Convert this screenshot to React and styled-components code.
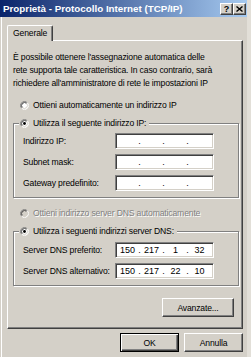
import React from "react";
import styled, { createGlobalStyle } from "styled-components";

const GlobalStyle = createGlobalStyle`
  html, body {
    margin: 0;
    padding: 0;
    background: #d4d0c8;
  }
  body {
    font-family: "Liberation Sans", Arial, sans-serif;
    font-size: 8.6px;
    letter-spacing: -0.15px;
    color: #000;
  }
`;

const Radio = ({ checked, disabled }) => (
  <RadioIcon width="9" height="9" viewBox="0 0 9 9">
    <circle cx="4.5" cy="4.5" r="3.5" fill={disabled ? "#d4d0c8" : "#fff"} />
    <path d="M1.67 7.33 A4 4 0 0 1 7.33 1.67" stroke="#808080" fill="none" />
    <path d="M7.33 1.67 A4 4 0 0 1 1.67 7.33" stroke="#fff" fill="none" />
    <path d="M2.38 6.62 A3 3 0 0 1 6.62 2.38" stroke="#404040" fill="none" />
    <path d="M6.62 2.38 A3 3 0 0 1 2.38 6.62" stroke="#d4d0c8" fill="none" />
    {checked && <circle cx="4.5" cy="4.5" r="1.4" fill="#000" />}
  </RadioIcon>
);

const IpField = ({ value = ["", "", "", ""] }) => (
  <IpBox>
    {value.map((v, i) => (
      <React.Fragment key={i}>
        {i > 0 && <Dot>.</Dot>}
        <Octet>{v}</Octet>
      </React.Fragment>
    ))}
  </IpBox>
);

export default function App() {
  return (
    <>
      <GlobalStyle />
      <Window>
        <TitleBar>
          <Title>Proprietà - Protocollo Internet (TCP/IP)</Title>
          <CaptionButtons>
            <CaptionButton>?</CaptionButton>
            <CaptionButton>
              <svg width="7" height="6" viewBox="0 0 7 6">
                <path d="M0.5 0.5 L6.5 5.5 M6.5 0.5 L0.5 5.5" stroke="#000" strokeWidth="1.4" />
              </svg>
            </CaptionButton>
          </CaptionButtons>
        </TitleBar>

        <Body>
          <TabRow>
            <Tab>Generale</Tab>
          </TabRow>
          <Panel>
            <Intro>
              È possibile ottenere l'assegnazione automatica delle
              <br />
              rete supporta tale caratteristica. In caso contrario, sarà
              <br />
              richiedere all'amministratore di rete le impostazioni IP
            </Intro>

            <RadioRow $top={9}>
              <Radio />
              <span>Ottieni automaticamente un indirizzo IP</span>
            </RadioRow>

            <Group>
              <Legend>
                <Radio checked />
                <span>Utilizza il seguente indirizzo IP:</span>
              </Legend>
              <Rows $top={4}>
                <FieldRow>
                  <FieldLabel>Indirizzo IP:</FieldLabel>
                  <IpField />
                </FieldRow>
                <FieldRow>
                  <FieldLabel>Subnet mask:</FieldLabel>
                  <IpField />
                </FieldRow>
                <FieldRow>
                  <FieldLabel>Gateway predefinito:</FieldLabel>
                  <IpField />
                </FieldRow>
              </Rows>
            </Group>

            <RadioRow $top={9} $disabled>
              <Radio disabled />
              <span>Ottieni indirizzo server DNS automaticamente</span>
            </RadioRow>

            <Group>
              <Legend>
                <Radio checked />
                <span>Utilizza i seguenti indirizzi server DNS:</span>
              </Legend>
              <Rows $top={5}>
                <FieldRow>
                  <FieldLabel>Server DNS preferito:</FieldLabel>
                  <IpField value={["150", "217", "1", "32"]} />
                </FieldRow>
                <FieldRow>
                  <FieldLabel>Server DNS alternativo:</FieldLabel>
                  <IpField value={["150", "217", "22", "10"]} />
                </FieldRow>
              </Rows>
            </Group>

            <AdvancedButton>Avanzate...</AdvancedButton>
          </Panel>

          <Footer>
            <Button $default>OK</Button>
            <Button>Annulla</Button>
          </Footer>
        </Body>
      </Window>
    </>
  );
}

const Window = styled.div`
  width: 251px;
  height: 357px;
  overflow: hidden;
  background: #d4d0c8;
  display: flex;
  flex-direction: column;
  box-sizing: border-box;
  border-right: 4px solid #e2dfd8;
`;

const TitleBar = styled.div`
  height: 17px;
  flex-shrink: 0;
  display: flex;
  align-items: center;
  padding: 0 1px 0 3px;
  background: linear-gradient(to right, #0a246a, #a6caf0);
`;

const Title = styled.div`
  color: #fff;
  font-weight: bold;
  font-size: 9.8px;
  letter-spacing: 0;
  white-space: nowrap;
`;

const CaptionButtons = styled.div`
  margin-left: auto;
  display: flex;
  padding-top: 1px;
`;

const CaptionButton = styled.div`
  width: 13px;
  height: 12px;
  box-sizing: border-box;
  display: flex;
  align-items: center;
  justify-content: center;
  background: #d4d0c8;
  border: 1px solid;
  border-color: #fff #404040 #404040 #fff;
  box-shadow: inset -1px -1px #808080;
  font-weight: bold;
  font-size: 9px;
  letter-spacing: 0;
  line-height: 1;
`;

const Body = styled.div`
  flex: 1;
  display: flex;
  flex-direction: column;
  padding: 8px 4px 0 7px;
  box-shadow: inset 1px 0 #d4d0c8, inset 2px 0 #fff;
`;

const TabRow = styled.div`
  display: flex;
  position: relative;
  z-index: 1;
  margin-bottom: -1px;
`;

const Tab = styled.div`
  height: 16px;
  box-sizing: border-box;
  padding: 1px 5px 0 5px;
  line-height: 13px;
  background: #d4d0c8;
  border: 1px solid;
  border-bottom: none;
  border-color: #fff #404040 #404040 #fff;
  border-radius: 2px 2px 0 0;
  box-shadow: inset -1px 0 #808080;
`;

const Panel = styled.div`
  height: 289px;
  box-sizing: border-box;
  display: flex;
  flex-direction: column;
  border: 1px solid;
  border-color: #fff #404040 #404040 #fff;
  box-shadow: inset -1px -1px #808080;
`;

const Intro = styled.p`
  margin: 0;
  padding: 10px 4px 0 5px;
  line-height: 13px;
  white-space: nowrap;
`;

const RadioRow = styled.div`
  display: flex;
  align-items: center;
  gap: 4px;
  height: 12px;
  margin: ${({ $top }) => $top}px 0 0 12px;
  color: ${({ $disabled }) => ($disabled ? "#808080" : "#000")};
  text-shadow: ${({ $disabled }) => ($disabled ? "1px 1px #fff" : "none")};
`;

const RadioIcon = styled.svg`
  flex-shrink: 0;
  display: block;
`;

const Group = styled.fieldset`
  margin: 6px 3px 0 5px;
  padding: 0;
  min-width: 0;
  border: 1px solid #808080;
  box-shadow: 1px 1px 0 #fff, inset 1px 1px 0 #fff;
`;

const Legend = styled.legend`
  display: flex;
  align-items: center;
  gap: 4px;
  height: 12px;
  margin-left: 5px;
  padding: 0 3px 0 1px;
  background: #d4d0c8;
`;

const Rows = styled.div`
  display: flex;
  flex-direction: column;
  gap: 5px;
  padding: ${({ $top }) => $top}px 0 6px 9px;
`;

const FieldRow = styled.div`
  display: flex;
  align-items: center;
  height: 16px;
`;

const FieldLabel = styled.div`
  width: 92px;
  flex-shrink: 0;
  white-space: nowrap;
`;

const IpBox = styled.div`
  width: 99px;
  height: 16px;
  box-sizing: border-box;
  display: flex;
  align-items: center;
  padding-left: 1px;
  background: #fff;
  border: 1px solid;
  border-color: #808080 #fff #fff #808080;
  box-shadow: inset 1px 1px #404040, inset -1px -1px #d4d0c8;
  font-size: 9px;
  letter-spacing: 0;
`;

const Octet = styled.span`
  width: 21px;
  text-align: center;
`;

const Dot = styled.span`
  width: 3px;
  text-align: center;
`;

const Button = styled.div`
  width: 59px;
  height: 19px;
  box-sizing: border-box;
  display: flex;
  align-items: center;
  justify-content: center;
  background: #d4d0c8;
  border: 1px solid;
  border-color: ${({ $default }) =>
    $default ? "#000" : "#fff #404040 #404040 #fff"};
  box-shadow: ${({ $default }) =>
    $default
      ? "inset 1px 1px #fff, inset -1px -1px #404040, inset -2px -2px #808080"
      : "inset -1px -1px #808080"};
`;

const AdvancedButton = styled(Button)`
  width: 72px;
  align-self: flex-end;
  margin: 12px 8px 0 0;
`;

const Footer = styled.div`
  display: flex;
  justify-content: flex-end;
  gap: 5px;
  margin-top: 4px;
`;
